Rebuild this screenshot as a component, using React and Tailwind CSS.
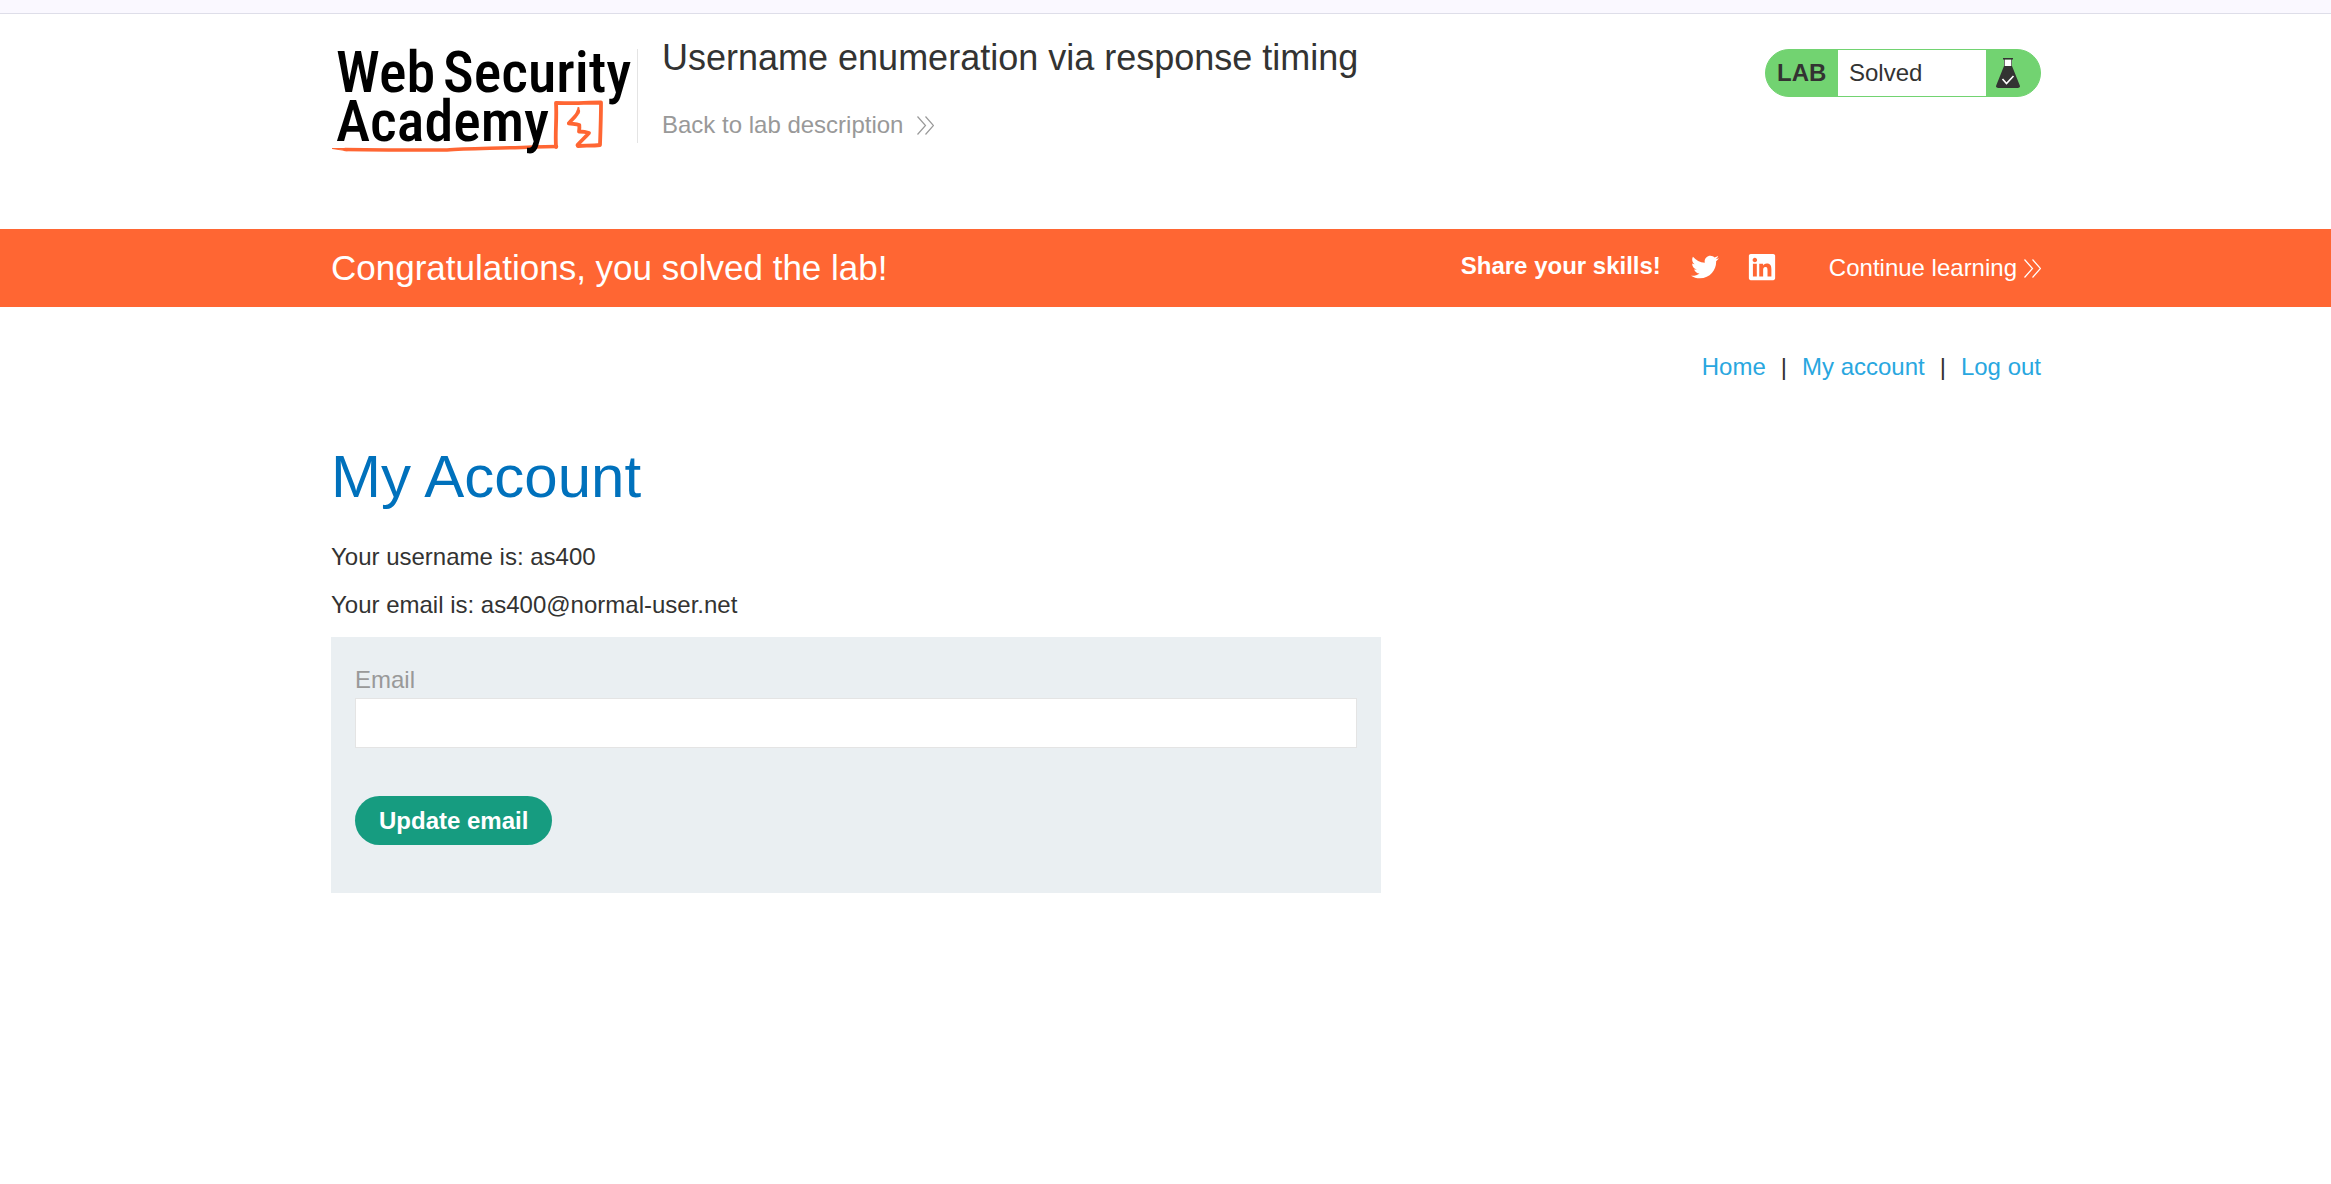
import { FaLinkedin, FaTwitter } from "react-icons/fa";

const navLinks = ["Home", "My account", "Log out"];

export default function App() {
  return (
    <div className="min-h-screen bg-white font-['Liberation_Sans',Arial,sans-serif] text-2xl leading-7 text-[#333332]">
      <div className="h-[14px] border-b border-[#dedee9] bg-[#faf8ff]" />
      <LabHeader />
      <SolvedBanner />
      <Container className="pt-[46px]">
        <nav className="flex justify-end gap-[15px]">
          {navLinks.map((label, i) => (
            <div key={label} className="flex gap-[15px]">
              {i > 0 && <span>|</span>}
              <a href="#" className="text-[#29a7df]">{label}</a>
            </div>
          ))}
        </nav>
        <h1 className="mt-[60px] text-[60px] leading-[72px] text-[#0071bc]">My Account</h1>
        <p className="mt-[30px]">Your username is: as400</p>
        <p className="mt-5">Your email is: as400@normal-user.net</p>
        <EmailForm />
      </Container>
    </div>
  );
}

function Container({ className = "", children }) {
  return (
    <div className="pl-[41px]">
      <div className={`mx-auto max-w-[1710px] ${className}`}>{children}</div>
    </div>
  );
}

function LabHeader() {
  return (
    <header>
      <Container className="flex h-[215px] items-start pt-[23px]">
        <a href="#" aria-label="Web Security Academy">
          <AcademyLogo />
        </a>
        <div className="mr-6 mt-3 h-[94px] w-px bg-[#e4e4e4]" />
        <div className="flex-1">
          <h2 className="text-4xl leading-[42px]">Username enumeration via response timing</h2>
          <a href="#" className="mt-8 flex items-center gap-[14px] text-[#999999]">
            Back to lab description
            <Chevrons />
          </a>
        </div>
        <LabStatus />
      </Container>
    </header>
  );
}

function AcademyLogo() {
  return (
    <svg viewBox="0 -12 306 124" className="h-[124px] w-[306px] overflow-visible" fill="none">
      <g stroke="#ff6633" strokeLinejoin="round" strokeLinecap="round">
        <path d="M14 100.500C50 101 90 101 116 101C135 99.500 165 99.500 202 98L225.500 97.500" strokeWidth="3.500" />
        <path d="M1.500 99.500L14 99.500L16 101.500z" strokeWidth="1" fill="#ff6633" />
        <path d="M225 98C224 82 226 70 225 54C240 54.500 256 53.500 270 53.500C270 68 269.500 82 269 96C262 97 254 96.500 247 97" strokeWidth="3.800" />
        <path d="M246.500 96C250 92 254.500 88 258 84C254 82.500 251 82.500 248 82.500C248.500 80 248.500 78 248.300 76C245 75 241 75 237.800 74.300C241 70 246.500 66.500 247.300 62" strokeWidth="3.800" />
        <path d="M247.400 64V59" strokeWidth="2.200" />
      </g>
      <g className="font-['Roboto_Condensed',Roboto,sans-serif] text-[58px] font-medium" fill="#000000">
        <text x="5" y="43">Web</text>
        <text x="112" y="43">Security</text>
        <text x="5" y="92">Academy</text>
      </g>
    </svg>
  );
}

function LabStatus() {
  return (
    <div className="mt-3 flex h-12 w-[276px] overflow-hidden rounded-full border border-[#72d371] bg-[#72d371]">
      <span className="w-[72px] pl-[11px] font-bold leading-[46px]">LAB</span>
      <span className="flex-1 bg-white pl-[11px] leading-[46px]">Solved</span>
      <span className="flex w-[54px] items-center pl-[10px]">
        <svg viewBox="0 0 24 30" className="h-[30px] w-6">
          <path d="M8 1.500h8v7H8z" fill="#ffffff" />
          <path d="M7 0h10v1.500H7z M8 1.500h.7v6.500H8z M15.300 1.500h.7v6.500h-.7z" fill="#333332" />
          <path d="M8 8h8l7.800 19.500q.5 2.500-2 2.500H2.200q-2.500 0-2-2.500z" fill="#333332" />
          <path d="M6.500 21l4 4.500 7-7.500" fill="none" stroke="#ffffff" strokeWidth="1.600" />
        </svg>
      </span>
    </div>
  );
}

function SolvedBanner() {
  return (
    <section className="bg-[#ff6633] text-white">
      <Container className="flex h-[78px] items-center">
        <h4 className="flex-1 text-[35px] leading-10">Congratulations, you solved the lab!</h4>
        <span className="mb-1 font-bold">Share your skills!</span>
        <a href="#" aria-label="Share on Twitter" className="mb-[2px] ml-[30px]">
          <FaTwitter className="size-7" />
        </a>
        <a href="#" aria-label="Share on LinkedIn" className="mb-[2px] ml-7">
          <FaLinkedin className="size-[30px]" />
        </a>
        <a href="#" className="ml-[52px] flex items-center gap-[7px]">
          Continue learning
          <Chevrons />
        </a>
      </Container>
    </section>
  );
}

function EmailForm() {
  return (
    <form className="mt-[18px] h-64 max-w-[1050px] bg-[#eaeff2] p-6">
      <label htmlFor="email" className="block pt-[5px] text-[#999999]">Email</label>
      <input
        id="email"
        type="email"
        className="mt-1 block h-[50px] w-full border border-[#e4e4e4] bg-white px-3 outline-none"
      />
      <button type="button" className="mt-12 h-[49px] rounded-full bg-[#169c80] px-6 font-bold text-white">
        Update email
      </button>
    </form>
  );
}

function Chevrons() {
  return (
    <svg viewBox="0 0 17 19" className="h-[19px] w-[17px]" fill="none" stroke="currentColor" strokeWidth="1.200">
      <path d="M.5.5l8 9-8 9M8.500.5l8 9-8 9" />
    </svg>
  );
}
